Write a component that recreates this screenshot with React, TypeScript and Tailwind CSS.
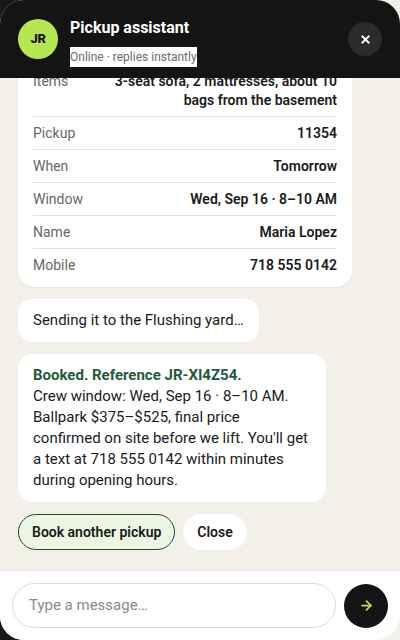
import React from 'react';
import { X, ArrowRight } from 'lucide-react';

const rows: { label: string; value: string }[] = [
  { label: 'Items', value: '3-seat sofa, 2 mattresses, about 10 bags from the basement' },
  { label: 'Pickup', value: '11354' },
  { label: 'When', value: 'Tomorrow' },
  { label: 'Window', value: 'Wed, Sep 16 · 8–10 AM' },
  { label: 'Name', value: 'Maria Lopez' },
  { label: 'Mobile', value: '718 555 0142' },
];

export default function App() {
  return (
    <div
      className="h-[640px] w-[400px] overflow-hidden bg-[linear-gradient(to_right,#161a14_0%,#161a14_50%,#f2f0e9_50%)]"
      style={{ fontFamily: 'Roboto, "Noto Sans", sans-serif' }}
    >
      <div className="flex h-full flex-col overflow-hidden rounded-[24px] bg-[#f2f0e9]">
        {/* Header */}
        <div className="flex h-[78px] shrink-0 items-center bg-[#141414] pl-[18px] pr-[18px]">
          <div className="flex h-10 w-10 items-center justify-center rounded-full bg-[#b6e651] text-[13px] font-black tracking-tight text-[#1a1a1a]">
            JR
          </div>
          <div className="ml-3 flex flex-col pt-[6px]">
            <span className="text-[16px] font-bold leading-5 text-white">Pickup assistant</span>
            <span className="mt-[9px] w-fit bg-white text-[12px] leading-5 text-[#6b6b6b]">
              Online · replies instantly
            </span>
          </div>
          <button className="ml-auto flex h-[34px] w-[34px] items-center justify-center rounded-full bg-[#2b2b2b] text-white">
            <X size={13} strokeWidth={3.4} />
          </button>
        </div>

        {/* Messages */}
        <div className="flex min-h-0 flex-1 flex-col justify-end gap-3 overflow-hidden px-[18px] pb-5">
          <div className="w-[334px] shrink-0 rounded-[16px] bg-white px-[15px] py-[6px] shadow-[0_1px_2px_rgba(0,0,0,0.06)]">
            {rows.map((r, i) => (
              <div
                key={r.label}
                className={`flex items-start justify-between gap-6 pb-[6px] pt-[7px] text-[14px] leading-[19px] ${i < rows.length - 1 ? 'border-b border-[#e6e4de]' : ''}`}
              >
                <span className="shrink-0 text-[#666]">{r.label}</span>
                <span className="text-right font-semibold text-[#1a1a1a]">{r.value}</span>
              </div>
            ))}
          </div>

          <div className="w-fit shrink-0 rounded-[14px] bg-white px-[15px] py-[11px] text-[15px] leading-[21px] text-[#1a1a1a]">
            Sending it to the Flushing yard…
          </div>

          <div className="w-[308px] shrink-0 rounded-[14px] bg-white px-[15px] py-[11px] text-[15px] leading-[21px] text-[#1a1a1a]">
            <div className="font-bold text-[#1f5a3b]">Booked. Reference JR-XI4Z54.</div>
            Crew window: Wed, Sep 16 · 8–10 AM. Ballpark $375–$525, final price confirmed on site before we lift. You'll get a text at 718 555 0142 within minutes during opening hours.
          </div>

          <div className="flex shrink-0 gap-2">
            <button className="h-9 rounded-full border border-[#1f4a30] bg-[#ecf5e2] px-[13px] text-[14px] font-semibold text-[#1a1a1a]">
              Book another pickup
            </button>
            <button className="h-9 rounded-full bg-white px-[14px] text-[14px] font-semibold text-[#1a1a1a]">
              Close
            </button>
          </div>
        </div>

        {/* Composer */}
        <div className="flex h-[70px] shrink-0 items-center gap-2 border-t border-[#e4e2dc] bg-white px-3">
          <div className="flex h-[45px] flex-1 items-center rounded-full border border-[#dcdcdc] px-4 text-[15px] text-[#8a8a8a]">
            Type a message…
          </div>
          <button className="flex h-11 w-11 items-center justify-center rounded-full bg-[#141414] text-[#b6e651]">
            <ArrowRight size={15} strokeWidth={2.8} />
          </button>
        </div>
      </div>
    </div>
  );
}
